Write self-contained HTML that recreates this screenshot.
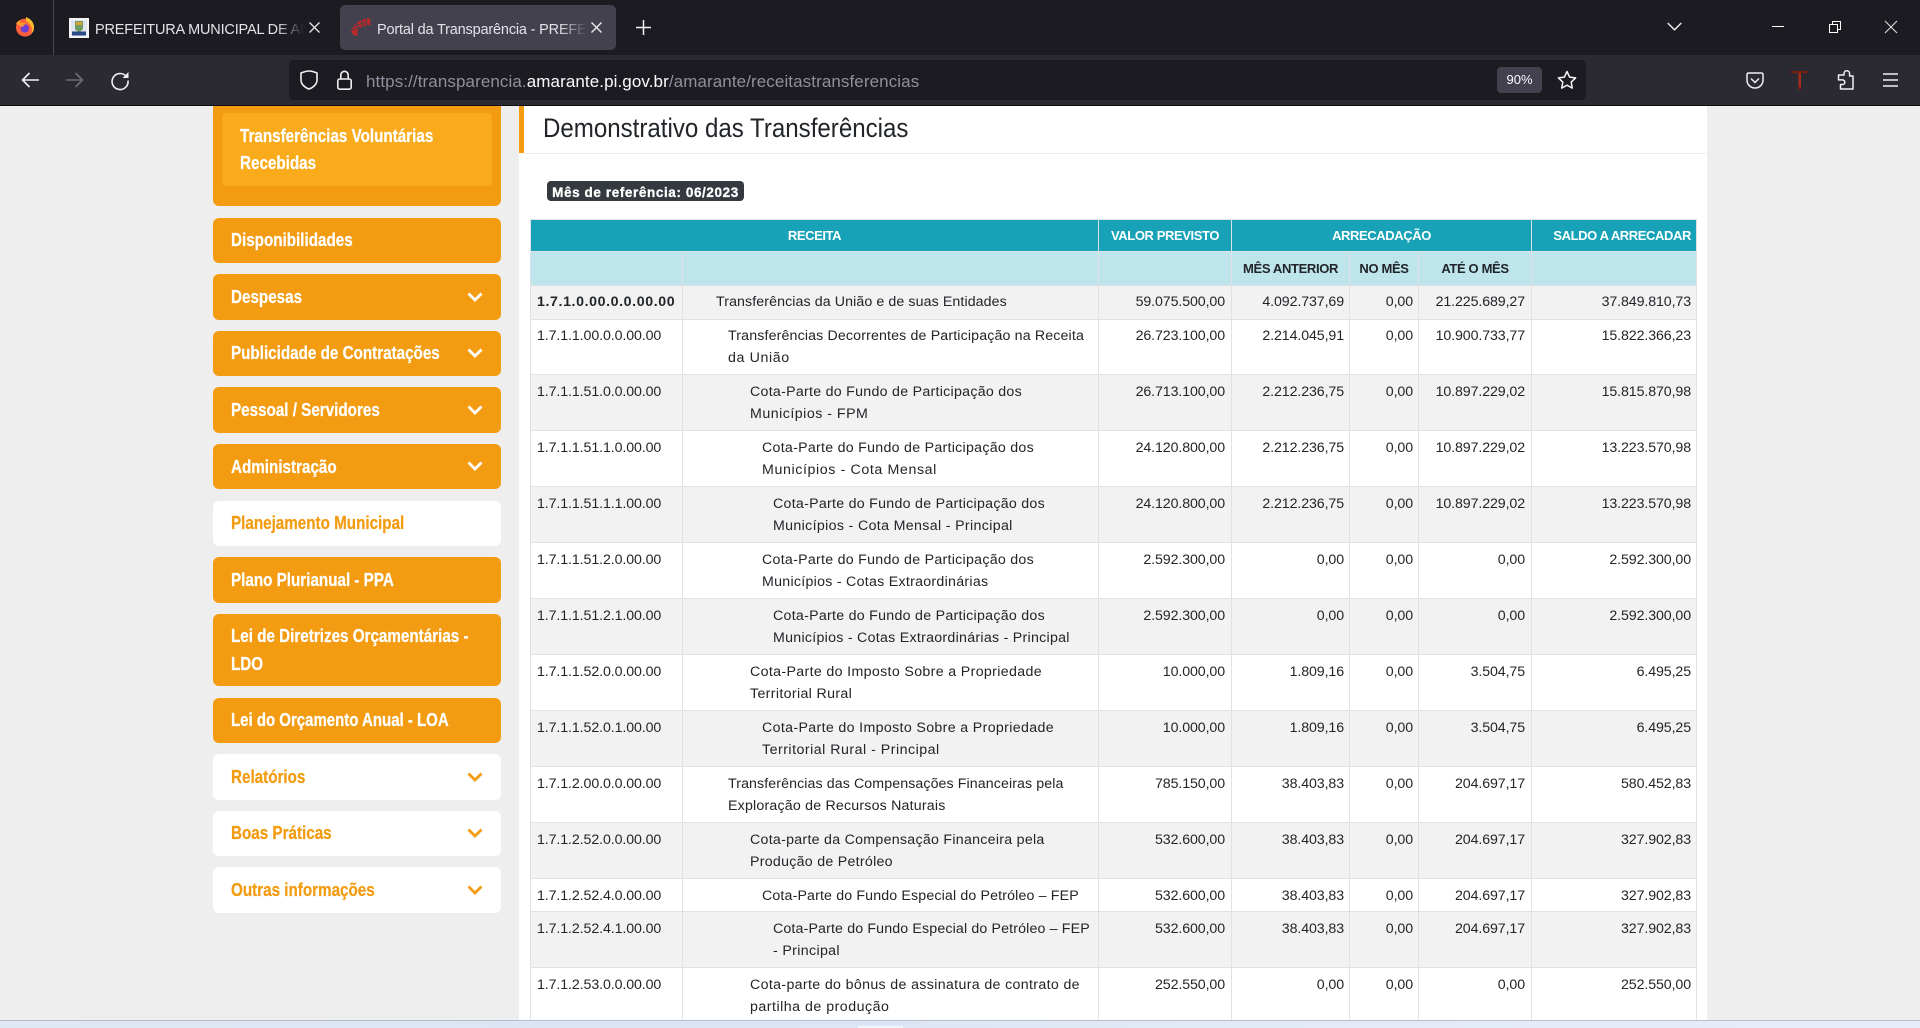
<!DOCTYPE html>
<html lang="pt-BR"><head><meta charset="utf-8"><title>Portal da Transparência</title>
<style>
*{box-sizing:border-box}
html,body{margin:0;padding:0;width:1920px;height:1028px;overflow:hidden;background:#eee;font-family:"Liberation Sans",sans-serif}
.a{position:absolute}
svg{position:absolute;overflow:visible}
#tabs{left:0;top:0;width:1920px;height:55px;background:#1c1b22}
#bar{left:0;top:55px;width:1920px;height:50px;background:#2b2a33}
#line{left:0;top:105px;width:1920px;height:1px;background:#0c0c0d}
.tt{position:absolute;top:20px;height:20px;line-height:20px;font-size:14.5px;color:#e3e3e8;white-space:nowrap;overflow:hidden;letter-spacing:-.18px}
.tt i{position:absolute;right:0;top:0;width:28px;height:20px}
#url{left:289px;top:60px;width:1297px;height:40px;background:#1c1b22;border-radius:4px}
#urlt{left:366px;top:71px;height:22px;line-height:22px;font-size:17px;letter-spacing:.09px;color:#8f8f9d;white-space:nowrap}
#urlt b{font-weight:400;color:#fbfbfe}
#zoomb{left:1497px;top:67px;width:45px;height:26px;background:#42414d;border-radius:4px;color:#fbfbfe;font-size:13px;line-height:26px;text-align:center}
.s{position:absolute;left:213px;width:288px;border-radius:6px;background:#f39c12;color:#fff;font:bold 18.3px/28px "Liberation Sans",sans-serif;padding:0 18px;white-space:nowrap;-webkit-text-stroke:.25px currentColor}
.s.w{background:#fff;color:#f39c12}
.s svg{left:254px;width:16px;height:10px}
.s span,#side1 span{display:inline-block;transform:scaleX(.832);transform-origin:0 0}
#main{left:519px;top:106px;width:1188px;height:914px;background:#fff;overflow:hidden}
#tit{left:543px;top:110px;font:400 27px/36px "Liberation Sans",sans-serif;color:#212529;white-space:nowrap;transform:scaleX(.892);transform-origin:0 0}
#badge{left:547px;top:181px;width:197px;height:20px;background:#343a40;border-radius:4px;color:#fff;font:bold 13.5px/23px "Liberation Sans",sans-serif;letter-spacing:.6px;text-align:center;white-space:nowrap;-webkit-text-stroke:.3px #fff}
#wrap{left:530px;top:219px;width:1167px;height:801px;overflow:hidden}
table{border-collapse:collapse;table-layout:fixed;width:1166px;font-size:14.2px;color:#212529;line-height:22px;letter-spacing:-.1px}
td,th{border:1px solid #dee2e6;padding:0 6px;vertical-align:top;white-space:nowrap;overflow:hidden}
td{padding-top:6px}
tr.t5 td{padding-top:5px}
td b{letter-spacing:.6px}
.h th{background:#17a2b8;color:#fff;font-size:13px;line-height:30px;border-color:#dee2e6;letter-spacing:-.4px;padding-top:1px}
.h2 th{background:#bee5eb;color:#212529;font-size:13px;line-height:30px;letter-spacing:-.35px;padding-top:2px}
tr.g td{background:#f2f2f2}
td.n{text-align:right}
td:nth-child(4).n,td:nth-child(5).n,td:nth-child(7).n{padding-right:5px}
.l1{padding-left:33px;letter-spacing:.1px}.l2{padding-left:45px}.l3{padding-left:67px}.l4{padding-left:79px}.l5{padding-left:90px}
.k1{letter-spacing:.1px}.k2{letter-spacing:.15px}.k3{letter-spacing:.28px}.k4{letter-spacing:.35px}.k5{letter-spacing:.5px}.k6{letter-spacing:.62px}.k7{letter-spacing:.2px}
#foot{left:0;top:1020px;width:1920px;height:8px;background:linear-gradient(90deg,#dfe6f4,#dbe5f6 40%,#e4ebf7 70%,#e6edf8);border-top:1px solid #b6bdca}
</style></head>
<body>
<div class="a" id="tabs"></div>
<div class="a" style="left:53px;top:0;width:1px;height:55px;background:#47464f"></div>

<svg style="left:15px;top:17px" width="20" height="20" viewBox="0 0 20 20">
<circle cx="10" cy="10.6" r="9" fill="#ff5f3a"/>
<path d="M11 0c5 2 8 5.500 8 10.500 0 2.500-1 4.500-2.500 6C18 10 15 6 11 4.500z" fill="#ffbd2e"/>
<path d="M1 7c1-2 3-4 5-4-.600 1-.800 2-.500 3 2-1 5-.500 6 1.500-1 .800-3 1-4 2" fill="#ff9a2e"/>
<circle cx="9.800" cy="11.400" r="4.200" fill="#6e3fd6"/>
<path d="M5 9.500c1.200-1.500 3-2 5-1.800L7.500 10z" fill="#ff9640"/>
</svg>

<svg style="left:69px;top:18px" width="20" height="20" viewBox="0 0 20 20">
<rect width="20" height="20" fill="#f4f4f4"/><rect x="2" y="2" width="16" height="16" fill="#dfe6ef"/>
<path d="M6 3h8v7c0 2-2 3-4 4-2-1-4-2-4-4z" fill="#6f9a62"/><rect x="7" y="4" width="6" height="3" fill="#d9a33a"/>
<rect x="3" y="13.5" width="14" height="4" fill="#2c4a86"/>
</svg>
<div class="tt" style="left:95px;width:209px">PREFEITURA MUNICIPAL DE AMARANTE<i style="background:linear-gradient(90deg,rgba(28,27,34,0),#1c1b22)"></i></div>
<svg style="left:309px;top:22px" width="11" height="11" viewBox="0 0 11 11"><path d="M.5.5l10 10M10.5.5l-10 10" stroke="#e6e6ea" stroke-width="1.3" fill="none"/></svg>

<div class="a" style="left:340px;top:5px;width:276px;height:45px;background:#42414d;border-radius:5px"></div>
<svg style="left:350px;top:18px" width="21" height="20" viewBox="0 0 21 20">
<path d="M1 13C3 6 10 1 20 0l.4 7C14 7 9 9 7 14l1 4c-4 0-6-2-7-5z" fill="#b8282c"/>
<path d="M6 3l3 10M11 1l2 8M16 0l1 7M2 9l14-5M1 12l9-3" stroke="#42414d" stroke-width=".9"/>
</svg>
<div class="tt" style="left:377px;width:210px">Portal da Transparência - PREFEITURA<i style="background:linear-gradient(90deg,rgba(66,65,77,0),#42414d)"></i></div>
<svg style="left:591px;top:22px" width="11" height="11" viewBox="0 0 11 11"><path d="M.5.5l10 10M10.5.5l-10 10" stroke="#f0f0f3" stroke-width="1.3" fill="none"/></svg>
<svg style="left:636px;top:20px" width="15" height="15" viewBox="0 0 15 15"><path d="M7.5 0v15M0 7.5h15" stroke="#f4f4f6" stroke-width="1.5" fill="none"/></svg>

<svg style="left:1667px;top:22px" width="15" height="9" viewBox="0 0 15 9"><path d="M.7 1l6.8 6.8L14.3 1" stroke="#e8e8ec" stroke-width="1.5" fill="none"/></svg>
<div class="a" style="left:1772px;top:25.5px;width:12px;height:1px;background:#fff"></div>
<svg style="left:1829px;top:21px" width="12" height="12" viewBox="0 0 12 12"><rect x=".5" y="3.5" width="8" height="8" fill="none" stroke="#fff"/><path d="M3.5 3.5v-3h8v8h-3" fill="none" stroke="#fff"/></svg>
<svg style="left:1885px;top:21px" width="12" height="12" viewBox="0 0 12 12"><path d="M0 0l12 12M12 0L0 12" stroke="#ddd" stroke-width="1.1" fill="none"/></svg>

<div class="a" id="bar"></div><div class="a" id="line"></div>
<svg style="left:21px;top:72px" width="18" height="16" viewBox="0 0 18 16"><path d="M18 8H1.5M8.5 1L1.5 8l7 7" fill="none" stroke="#f0f0f3" stroke-width="1.6"/></svg>
<svg style="left:66px;top:72px" width="18" height="16" viewBox="0 0 18 16"><path d="M0 8h16.5M9.5 1l7 7-7 7" fill="none" stroke="#6e6d76" stroke-width="1.6"/></svg>
<svg style="left:111px;top:71px" width="18" height="18" viewBox="0 0 18 18"><path d="M15.3 5.5A8 8 0 1 0 17 9.5" fill="none" stroke="#f0f0f3" stroke-width="1.6"/><path d="M17.5 1v6h-6z" fill="#f0f0f3"/></svg>
<div class="a" id="url"></div>
<svg style="left:300px;top:70px" width="18" height="20" viewBox="0 0 18 20"><path d="M9 1c3 0 5.5 1 8 2v7c0 4-3.500 7.500-8 9C4.500 17.500 1 14 1 10V3c2.500-1 5-2 8-2z" fill="none" stroke="#f0f0f3" stroke-width="1.6"/></svg>
<svg style="left:337px;top:70px" width="15" height="20" viewBox="0 0 15 20"><path d="M3.800 9V5a3.700 3.700 0 0 1 7.400 0v4" fill="none" stroke="#f0f0f3" stroke-width="1.6"/><rect x=".8" y="9" width="13.400" height="10.200" rx="2" fill="none" stroke="#f0f0f3" stroke-width="1.600"/></svg>
<div class="a" id="urlt">https://transparencia.<b>amarante.pi.gov.br</b>/amarante/receitastransferencias</div>
<div class="a" id="zoomb">90%</div>
<svg style="left:1557px;top:70px" width="20" height="20" viewBox="0 0 20 20"><path d="M10 1.500l2.600 5.600 6 .8-4.400 4.200 1.100 6L10 15.200l-5.300 2.900 1.100-6L1.400 7.900l6-.8z" fill="none" stroke="#f4f4f6" stroke-width="1.500" stroke-linejoin="round"/></svg>
<svg style="left:1746px;top:72px" width="18" height="17" viewBox="0 0 18 17"><path d="M2.500 1h13c.800 0 1.500.700 1.500 1.500V8c0 4.500-3.500 8-8 8s-8-3.500-8-8V2.500C1 1.700 1.700 1 2.500 1z" fill="none" stroke="#f0f0f3" stroke-width="1.500"/><path d="M5 6.500l4 4 4-4" fill="none" stroke="#f0f0f3" stroke-width="1.500"/></svg>
<svg style="left:1791px;top:70px" width="17" height="20" viewBox="0 0 17 20"><path d="M0 1h17v2H10v16.500H7.500V3H0z" fill="#7a1d12"/><path d="M7.500 3h2.500v14H7.500z" fill="#a82a18"/></svg>
<svg style="left:1837px;top:70px" width="17" height="20" viewBox="0 0 17 20"><path d="M7 5V3.500a2.800 2.800 0 0 1 5.600 0V6H16v13H3.500v-4.500h2a2.300 2.300 0 0 0 0-4.600h-4V5z" fill="none" stroke="#f0f0f3" stroke-width="1.500" stroke-linejoin="round"/></svg>
<svg style="left:1883px;top:73px" width="15" height="14" viewBox="0 0 15 14"><path d="M0 1h15M0 7h15M0 13h15" stroke="#f0f0f3" stroke-width="1.500"/></svg>

<div class="a" id="main">
<div class="a" style="left:0;top:0;width:5px;height:47px;background:#f39c12"></div>
<div class="a" style="left:5px;top:47px;width:1183px;height:1px;background:#eee"></div>
</div>

<div class="s" style="top:106px;height:100px;border-radius:0 0 6px 6px"></div>
<div class="a" id="side1" style="left:222px;top:113px;width:270px;height:73px;background:#f9ab1c;border-radius:4px;color:#fff;font:bold 18.3px/27px 'Liberation Sans',sans-serif;padding:9px 18px;white-space:nowrap;-webkit-text-stroke:.25px #fff"><span>Transferências Voluntárias<br>Recebidas</span></div>

<div class="s" style="top:218px;height:45px;padding-top:8px"><span>Disponibilidades</span></div>
<div class="s" style="top:274px;height:46px;padding-top:9px"><span>Despesas</span><svg style="top:18px" viewBox="0 0 16 10"><path d="M1.500 1.500L8 8l6.500-6.500" fill="none" stroke="#fff" stroke-width="2.800"/></svg></div>
<div class="s" style="top:331px;height:45px;padding-top:8px"><span>Publicidade de Contratações</span><svg style="top:17px" viewBox="0 0 16 10"><path d="M1.500 1.500L8 8l6.500-6.500" fill="none" stroke="#fff" stroke-width="2.800"/></svg></div>
<div class="s" style="top:387px;height:46px;padding-top:9px"><span>Pessoal / Servidores</span><svg style="top:18px" viewBox="0 0 16 10"><path d="M1.500 1.500L8 8l6.500-6.500" fill="none" stroke="#fff" stroke-width="2.800"/></svg></div>
<div class="s" style="top:444px;height:45px;padding-top:9px"><span>Administração</span><svg style="top:17px" viewBox="0 0 16 10"><path d="M1.500 1.500L8 8l6.500-6.500" fill="none" stroke="#fff" stroke-width="2.800"/></svg></div>
<div class="s w" style="top:501px;height:45px;padding-top:8px"><span>Planejamento Municipal</span></div>
<div class="s" style="top:557px;height:46px;padding-top:9px"><span>Plano Plurianual - PPA</span></div>
<div class="s" style="top:614px;height:72px;padding-top:8px"><span>Lei de Diretrizes Orçamentárias -<br>LDO</span></div>
<div class="s" style="top:698px;height:45px;padding-top:8px"><span style="transform:scaleX(.82)">Lei do Orçamento Anual - LOA</span></div>
<div class="s w" style="top:754px;height:46px;padding-top:9px"><span>Relatórios</span><svg style="top:18px" viewBox="0 0 16 10"><path d="M1.500 1.500L8 8l6.500-6.500" fill="none" stroke="#f39c12" stroke-width="2.800"/></svg></div>
<div class="s w" style="top:811px;height:45px;padding-top:8px"><span>Boas Práticas</span><svg style="top:17px" viewBox="0 0 16 10"><path d="M1.500 1.500L8 8l6.500-6.500" fill="none" stroke="#f39c12" stroke-width="2.800"/></svg></div>
<div class="s w" style="top:867px;height:46px;padding-top:9px"><span>Outras informações</span><svg style="top:18px" viewBox="0 0 16 10"><path d="M1.500 1.500L8 8l6.500-6.500" fill="none" stroke="#f39c12" stroke-width="2.800"/></svg></div>

<div class="a" id="tit">Demonstrativo das Transferências</div>
<div class="a" id="badge">Mês de referência: 06/2023</div>

<div class="a" id="wrap">
<table>
<colgroup><col style="width:152px"><col style="width:416px"><col style="width:133px"><col style="width:118px"><col style="width:69px"><col style="width:113px"><col style="width:165px"></colgroup>
<tr class="h" style="height:32px"><th colspan="2">RECEITA</th><th>VALOR PREVISTO</th><th colspan="3">ARRECADAÇÃO</th><th style="text-align:right;padding-right:5px">SALDO A ARRECADAR</th></tr>
<tr class="h2" style="height:34px"><th></th><th></th><th></th><th>MÊS ANTERIOR</th><th>NO MÊS</th><th>ATÉ O MÊS</th><th></th></tr>
<tr class="g t5" style="height:34px"><td><b>1.7.1.0.00.0.0.00.00</b></td><td class="l1">Transferências da União e de suas Entidades</td><td class="n">59.075.500,00</td><td class="n">4.092.737,69</td><td class="n">0,00</td><td class="n">21.225.689,27</td><td class="n">37.849.810,73</td></tr>
<tr class="t5" style="height:55px"><td>1.7.1.1.00.0.0.00.00</td><td class="l2"><span class="k2">Transferências Decorrentes de Participação na Receita</span><br><span class="k6">da União</span></td><td class="n">26.723.100,00</td><td class="n">2.214.045,91</td><td class="n">0,00</td><td class="n">10.900.733,77</td><td class="n">15.822.366,23</td></tr>
<tr class="g" style="height:56px"><td>1.7.1.1.51.0.0.00.00</td><td class="l3"><span class="k3">Cota-Parte do Fundo de Participação dos</span><br><span class="k5">Municípios - FPM</span></td><td class="n">26.713.100,00</td><td class="n">2.212.236,75</td><td class="n">0,00</td><td class="n">10.897.229,02</td><td class="n">15.815.870,98</td></tr>
<tr style="height:56px"><td>1.7.1.1.51.1.0.00.00</td><td class="l4"><span class="k3">Cota-Parte do Fundo de Participação dos</span><br><span class="k6">Municípios - Cota Mensal</span></td><td class="n">24.120.800,00</td><td class="n">2.212.236,75</td><td class="n">0,00</td><td class="n">10.897.229,02</td><td class="n">13.223.570,98</td></tr>
<tr class="g" style="height:56px"><td>1.7.1.1.51.1.1.00.00</td><td class="l5"><span class="k3">Cota-Parte do Fundo de Participação dos</span><br><span class="k4">Municípios - Cota Mensal - Principal</span></td><td class="n">24.120.800,00</td><td class="n">2.212.236,75</td><td class="n">0,00</td><td class="n">10.897.229,02</td><td class="n">13.223.570,98</td></tr>
<tr style="height:56px"><td>1.7.1.1.51.2.0.00.00</td><td class="l4"><span class="k3">Cota-Parte do Fundo de Participação dos</span><br><span class="k3">Municípios - Cotas Extraordinárias</span></td><td class="n">2.592.300,00</td><td class="n">0,00</td><td class="n">0,00</td><td class="n">0,00</td><td class="n">2.592.300,00</td></tr>
<tr class="g" style="height:56px"><td>1.7.1.1.51.2.1.00.00</td><td class="l5"><span class="k3">Cota-Parte do Fundo de Participação dos</span><br><span class="k3">Municípios - Cotas Extraordinárias - Principal</span></td><td class="n">2.592.300,00</td><td class="n">0,00</td><td class="n">0,00</td><td class="n">0,00</td><td class="n">2.592.300,00</td></tr>
<tr style="height:56px"><td>1.7.1.1.52.0.0.00.00</td><td class="l3"><span class="k4">Cota-Parte do Imposto Sobre a Propriedade</span><br><span class="k4">Territorial Rural</span></td><td class="n">10.000,00</td><td class="n">1.809,16</td><td class="n">0,00</td><td class="n">3.504,75</td><td class="n">6.495,25</td></tr>
<tr class="g" style="height:56px"><td>1.7.1.1.52.0.1.00.00</td><td class="l4"><span class="k4">Cota-Parte do Imposto Sobre a Propriedade</span><br><span class="k5">Territorial Rural - Principal</span></td><td class="n">10.000,00</td><td class="n">1.809,16</td><td class="n">0,00</td><td class="n">3.504,75</td><td class="n">6.495,25</td></tr>
<tr style="height:56px"><td>1.7.1.2.00.0.0.00.00</td><td class="l2"><span class="k1">Transferências das Compensações Financeiras pela</span><br><span class="k7">Exploração de Recursos Naturais</span></td><td class="n">785.150,00</td><td class="n">38.403,83</td><td class="n">0,00</td><td class="n">204.697,17</td><td class="n">580.452,83</td></tr>
<tr class="g" style="height:56px"><td>1.7.1.2.52.0.0.00.00</td><td class="l3"><span class="k3">Cota-parte da Compensação Financeira pela</span><br><span class="k3">Produção de Petróleo</span></td><td class="n">532.600,00</td><td class="n">38.403,83</td><td class="n">0,00</td><td class="n">204.697,17</td><td class="n">327.902,83</td></tr>
<tr style="height:33px"><td>1.7.1.2.52.4.0.00.00</td><td class="l4"><span class="k2">Cota-Parte do Fundo Especial do Petróleo – FEP</span></td><td class="n">532.600,00</td><td class="n">38.403,83</td><td class="n">0,00</td><td class="n">204.697,17</td><td class="n">327.902,83</td></tr>
<tr class="g" style="height:56px"><td>1.7.1.2.52.4.1.00.00</td><td class="l5"><span class="k2">Cota-Parte do Fundo Especial do Petróleo – FEP</span><br><span class="k4">- Principal</span></td><td class="n">532.600,00</td><td class="n">38.403,83</td><td class="n">0,00</td><td class="n">204.697,17</td><td class="n">327.902,83</td></tr>
<tr style="height:56px"><td>1.7.1.2.53.0.0.00.00</td><td class="l3"><span class="k4">Cota-parte do bônus de assinatura de contrato de</span><br><span class="k5">partilha de produção</span></td><td class="n">252.550,00</td><td class="n">0,00</td><td class="n">0,00</td><td class="n">0,00</td><td class="n">252.550,00</td></tr>
</table>
</div>
<div class="a" id="foot"></div>
<div class="a" style="left:858px;top:1026px;width:45px;height:2px;background:#f3f6fb"></div>
</body></html>
